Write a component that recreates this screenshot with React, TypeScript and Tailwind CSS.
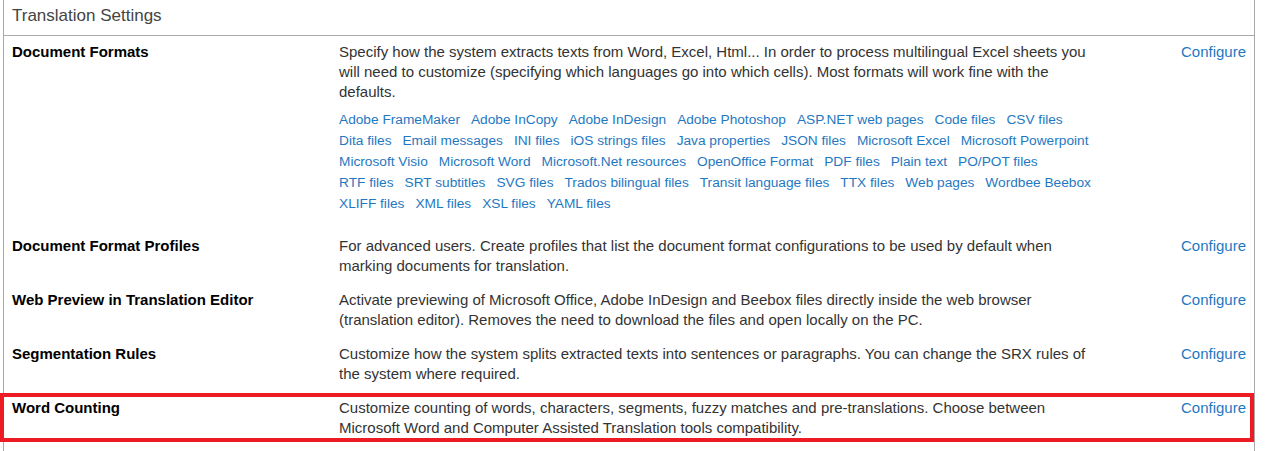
const formats = [
  "Adobe FrameMaker",
  "Adobe InCopy",
  "Adobe InDesign",
  "Adobe Photoshop",
  "ASP.NET web pages",
  "Code files",
  "CSV files",
  "Dita files",
  "Email messages",
  "INI files",
  "iOS strings files",
  "Java properties",
  "JSON files",
  "Microsoft Excel",
  "Microsoft Powerpoint",
  "Microsoft Visio",
  "Microsoft Word",
  "Microsoft.Net resources",
  "OpenOffice Format",
  "PDF files",
  "Plain text",
  "PO/POT files",
  "RTF files",
  "SRT subtitles",
  "SVG files",
  "Trados bilingual files",
  "Transit language files",
  "TTX files",
  "Web pages",
  "Wordbee Beebox",
  "XLIFF files",
  "XML files",
  "XSL files",
  "YAML files",
];

type Setting = {
  title: string;
  text: string;
  formats?: boolean;
  highlight?: boolean;
};

const settings: Setting[] = [
  {
    title: "Document Formats",
    text: "Specify how the system extracts texts from Word, Excel, Html... In order to process multilingual Excel sheets you will need to customize (specifying which languages go into which cells). Most formats will work fine with the defaults.",
    formats: true,
  },
  {
    title: "Document Format Profiles",
    text: "For advanced users. Create profiles that list the document format configurations to be used by default when marking documents for translation.",
  },
  {
    title: "Web Preview in Translation Editor",
    text: "Activate previewing of Microsoft Office, Adobe InDesign and Beebox files directly inside the web browser (translation editor). Removes the need to download the files and open locally on the PC.",
  },
  {
    title: "Segmentation Rules",
    text: "Customize how the system splits extracted texts into sentences or paragraphs. You can change the SRX rules of the system where required.",
  },
  {
    title: "Word Counting",
    text: "Customize counting of words, characters, segments, fuzzy matches and pre-translations. Choose between Microsoft Word and Computer Assisted Translation tools compatibility.",
    highlight: true,
  },
];

function SettingRow({ s }: { s: Setting }) {
  return (
    <div className="relative grid grid-cols-[327px_759px_1fr] pl-2 pr-2 pt-[6px] pb-[8px]">
      <div className="text-[15px] leading-5 font-bold text-black">{s.title}</div>
      <div>
        <p className="text-[15px] leading-5 text-[#333]">{s.text}</p>
        {/* format list */}
        {s.formats && (
          <div className="mt-[7px] mb-2 flex flex-wrap gap-x-[11px] text-[13.7px] leading-[21px]">
            {formats.map((f) => (
              <a key={f} href="#" className="text-[#1f78c1] hover:underline">
                {f}
              </a>
            ))}
          </div>
        )}
      </div>
      <div className="text-right text-[15px] leading-5">
        <a href="#" className="text-[#1f78c1] hover:underline">
          Configure
        </a>
      </div>
      {s.highlight && (
        <div className="pointer-events-none absolute top-[1px] left-[-4px] right-0 h-[49px] border-4 border-[#ed1c24]" />
      )}
    </div>
  );
}

export default function App() {
  return (
    <div className="h-[451px] w-[1265px] overflow-hidden bg-white font-['Liberation_Sans',Arial,sans-serif]">
      <div className="ml-[3px] h-full w-[1252px] border-x border-[#aaa]">
        <div className="h-[36px] border-b border-[#aaa] pl-2 pt-[6px] text-[17px] leading-5 text-[#444]">
          Translation Settings
        </div>
        {settings.map((s) => (
          <SettingRow key={s.title} s={s} />
        ))}
      </div>
    </div>
  );
}
